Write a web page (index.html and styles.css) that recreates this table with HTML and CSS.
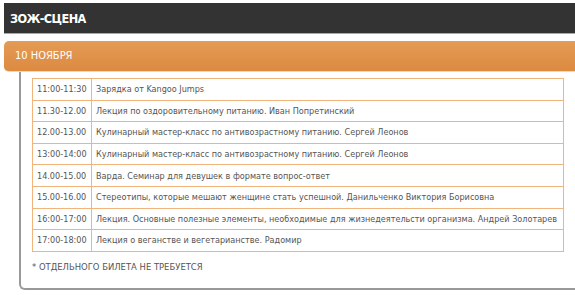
FILE: index.html
```html
<!DOCTYPE html>
<html lang="ru">
<head>
<meta charset="utf-8">
<link rel="stylesheet" href="styles.css">
</head>
<body>
<div class="page">
  <div class="stage-title">ЗОЖ-СЦЕНА</div>
  <div class="day">
    <div class="day-head">10 НОЯБРЯ</div>
    <div class="day-body">
      <table class="sched">
        <tr><td class="t">11:00-11:30</td><td>Зарядка от Kangoo Jumps</td></tr>
        <tr><td class="t">11.30-12.00</td><td>Лекция по оздоровительному питанию. Иван Попретинский</td></tr>
        <tr><td class="t">12.00-13.00</td><td>Кулинарный мастер-класс по антивозрастному питанию. Сергей Леонов</td></tr>
        <tr><td class="t">13:00-14:00</td><td>Кулинарный мастер-класс по антивозрастному питанию. Сергей Леонов</td></tr>
        <tr><td class="t">14.00-15.00</td><td>Варда. Семинар для девушек в формате вопрос-ответ</td></tr>
        <tr><td class="t">15.00-16.00</td><td>Стереотипы, которые мешают женщине стать успешной. Данильченко Виктория Борисовна</td></tr>
        <tr><td class="t">16:00-17:00</td><td>Лекция. Основные полезные элементы, необходимые для жизнедеятельсти организма. Андрей Золотарев</td></tr>
        <tr><td class="t">17:00-18:00</td><td>Лекция о веганстве и вегетарианстве. Радомир</td></tr>
      </table>
      <p class="note">* ОТДЕЛЬНОГО БИЛЕТА НЕ ТРЕБУЕТСЯ</p>
    </div>
  </div>
</div>
</body>
</html>
```
FILE: styles.css
```css
html, body {
  margin: 0;
  padding: 0;
  background: #fff;
  overflow: hidden;
}
body {
  font-family: "DejaVu Sans Condensed", "DejaVu Sans", sans-serif;
  font-stretch: condensed;
  color: #555;
}
.page {
  padding: 3px 0 0 4px;
}
.stage-title {
  background: #333;
  color: #fff;
  font-weight: bold;
  font-size: 12.6px;
  letter-spacing: -0.6px;
  height: 30px;
  line-height: 31px;
  padding-left: 6px;
  border-bottom: 1px solid #a8a8a8;
}
.day {
  margin-top: 7px;
}
.day-head {
  background: linear-gradient(#e49b55, #dc8a40);
  color: #fff;
  font-size: 11px;
  height: 30px;
  line-height: 30px;
  padding-left: 11px;
  border-radius: 5px 0 0 5px;
  border-bottom: 1px solid #f6d3b2;
}
.day-body {
  margin-left: 15px;
  border-left: 2px solid #999;
  border-bottom: 2px solid #999;
  border-bottom-left-radius: 6px;
  padding: 6px 0 16px 11px;
}
.sched {
  border-collapse: collapse;
  width: 532px;
  font-size: 9px;
}
.sched td {
  border: 1px solid #f0b47c;
  height: 20.6px;
  padding: 0 4px;
  white-space: nowrap;
}
.sched td.t {
  width: 50px;
}
.note {
  margin: 9px 0 0 0;
  font-size: 9.4px;
}
```
